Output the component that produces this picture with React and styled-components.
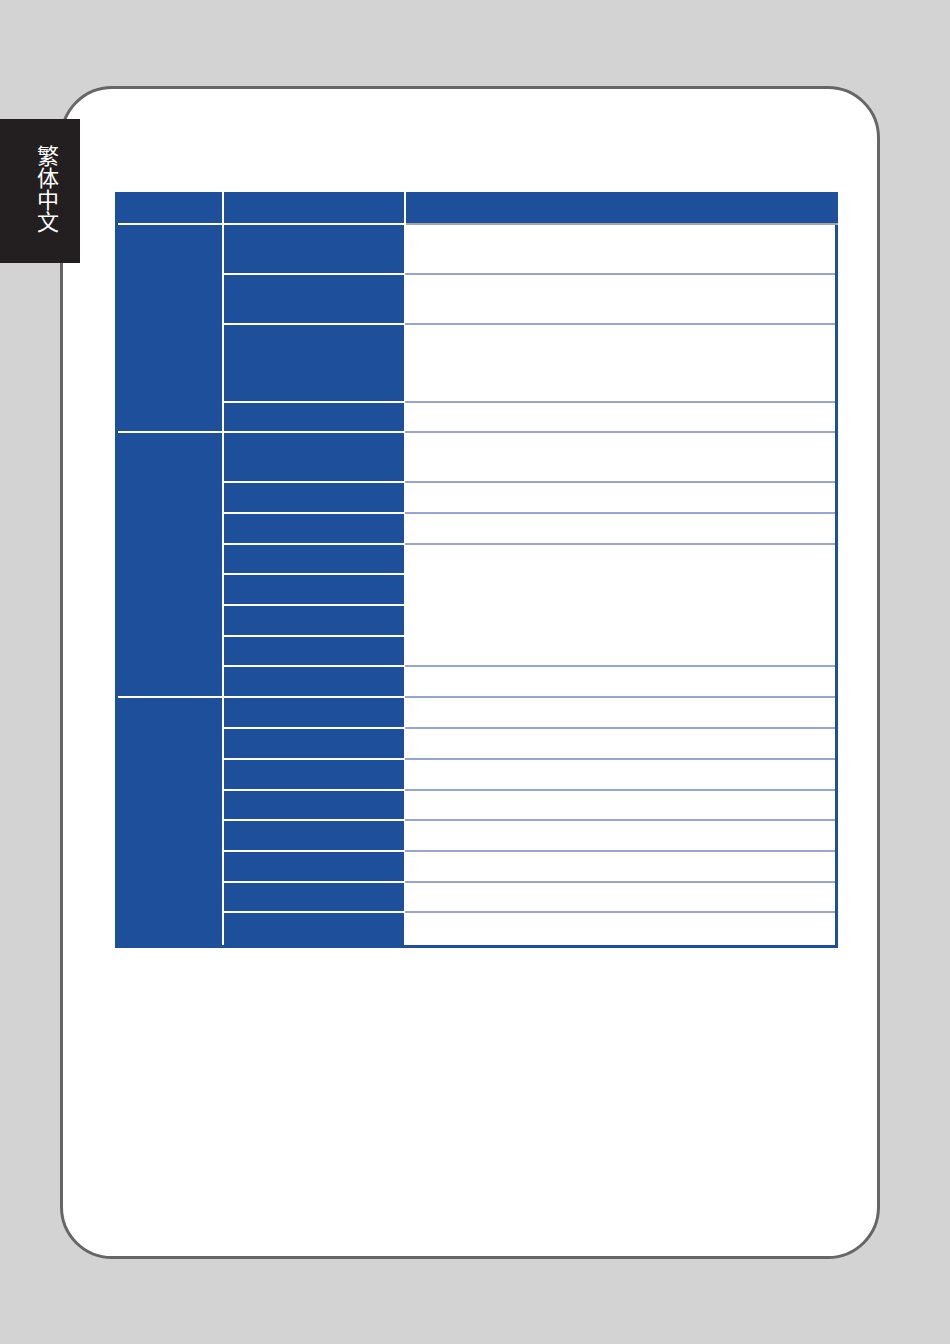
import React from "react";
import styled, { createGlobalStyle } from "styled-components";

const Global = createGlobalStyle`
  html, body { margin: 0; padding: 0; background: #d3d3d3; }
  body { font-family: "Noto Sans", "Noto Sans CJK TC", sans-serif; }
`;

const BLUE = "#1e4f9b";
const LAV = "#99a3d4";

const Page = styled.div`
  position: relative;
  width: 950px;
  height: 1344px;
  background: #d3d3d3;
  padding: 86px 0 0 60px;
  box-sizing: border-box;
`;

const Card = styled.div`
  width: 820px;
  height: 1173px;
  box-sizing: border-box;
  background: #fff;
  border: 3px solid #666;
  border-radius: 52px;
  padding: 103px 0 0 52px;
`;

const Tab = styled.div`
  position: absolute;
  left: 0;
  top: 119px;
  width: 80px;
  height: 144px;
  background: #231f20;
  box-sizing: border-box;
  padding: 26px 0 0 37px;
`;

const TabText = styled.div`
  writing-mode: vertical-rl;
  text-orientation: upright;
  color: #fff;
  font-family: "Noto Sans CJK TC", "Noto Sans CJK SC", sans-serif;
  font-size: 22px;
  line-height: 22px;
`;

const Table = styled.div`
  display: grid;
  width: 723px;
  box-sizing: border-box;
  grid-template-columns: 107px 180px 1fr;
  column-gap: 2px;
  grid-template-rows: ${(p) => p.$rows.map((r) => r + "px").join(" ")};
  border-right: 3px solid ${BLUE};
  border-bottom: 3px solid ${BLUE};
  background: #fff;
`;

const insetLine = `
  background-image: linear-gradient(#fff, #fff);
  background-size: calc(100% - 3px) 2px;
  background-position: right bottom;
  background-repeat: no-repeat;
`;

const Head = styled.div`
  background-color: ${BLUE};
  grid-column: ${(p) => p.$col};
  grid-row: 1;
  border-bottom: ${(p) =>
    p.$col === 1 ? "none" : `2px solid ${p.$gray ? "#a6a6a6" : "#fff"}`};
  ${(p) => (p.$col === 1 ? insetLine : "")}
  margin-right: ${(p) => (p.$gray ? "-3px" : "0")};
`;

const GroupCell = styled.div`
  background-color: ${BLUE};
  grid-column: 1;
  grid-row: ${(p) => p.$from} / ${(p) => p.$to};
  ${(p) => (p.$last ? "" : insetLine)}
`;

const ItemCell = styled.div`
  background: ${BLUE};
  grid-column: 2;
  grid-row: ${(p) => p.$row};
  border-bottom: ${(p) => (p.$last ? "none" : "2px solid #fff")};
`;

const DescCell = styled.div`
  background: #fff;
  grid-column: 3;
  grid-row: ${(p) => p.$from} / ${(p) => p.$to};
  border-bottom: ${(p) => (p.$last ? "none" : `2px solid ${LAV}`)};
  margin-left: -1px;
`;

const rows = [33, 50, 50, 78, 30, 50, 31, 31, 30, 31, 31, 30, 31, 31, 31, 31, 30, 31, 31, 30, 32];
const bodyCount = rows.length - 1;

const groups = [
  [2, 6],
  [6, 14],
  [14, 22],
];

const descs = [];
for (let r = 2; r <= 21; r++) {
  if (r === 9) {
    descs.push([9, 13]);
    r = 12;
    continue;
  }
  descs.push([r, r + 1]);
}

export default function App() {
  return (
    <>
      <Global />
      <Page>
        <Card>
          <Table $rows={rows}>
            <Head $col={1} />
            <Head $col={2} />
            <Head $col={3} $gray />
            {groups.map(([a, b], i) => (
              <GroupCell key={"g" + i} $from={a} $to={b} $last={i === groups.length - 1} />
            ))}
            {Array.from({ length: bodyCount }, (_, i) => (
              <ItemCell key={"i" + i} $row={i + 2} $last={i === bodyCount - 1} />
            ))}
            {descs.map(([a, b], i) => (
              <DescCell key={"d" + i} $from={a} $to={b} $last={i === descs.length - 1} />
            ))}
          </Table>
        </Card>
        <Tab>
          <TabText>繁体中文</TabText>
        </Tab>
      </Page>
    </>
  );
}
